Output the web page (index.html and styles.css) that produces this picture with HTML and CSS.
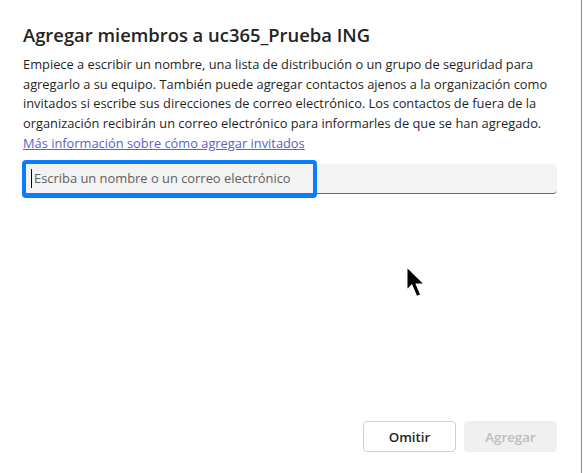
FILE: index.html
```html
<!DOCTYPE html>
<html lang="es">
<head>
<meta charset="utf-8">
<title>Agregar miembros</title>
<link rel="stylesheet" href="styles.css">
</head>
<body>
<div class="dialog">
  <h1 class="title">Agregar miembros a uc365_Prueba ING</h1>
  <p class="desc">Empiece a escribir un nombre, una lista de distribución o un grupo de seguridad para<br>agregarlo a su equipo. También puede agregar contactos ajenos a la organización como<br>invitados si escribe sus direcciones de correo electrónico. Los contactos de fuera de la<br>organización recibirán un correo electrónico para informarles de que se han agregado.<br><a class="link" href="#">Más información sobre cómo agregar invitados</a></p>
  <div class="field">
    <div class="input"><span class="caret"></span><span class="placeholder">Escriba un nombre o un correo electrónico</span></div>
    <div class="focus-ring"></div>
  </div>
  <div class="spacer"></div>
  <div class="actions">
    <button class="btn btn-secondary">Omitir</button>
    <button class="btn btn-disabled">Agregar</button>
  </div>
  <svg class="pointer" width="17" height="29" viewBox="0 0 17 29"><path d="M0.5 0.5 L0.5 20.5 L5 16 L10 27.8 L13 26.6 L8.3 15.6 L15.8 15.6 Z" fill="#000"/></svg>
</div>
</body>
</html>
```
FILE: styles.css
```css
html, body {
  margin: 0;
  padding: 0;
  background: #ffffff;
}
body {
  font-family: "Open Sans", "Noto Sans", sans-serif;
  color: #242424;
}
.dialog {
  position: relative;
  box-sizing: border-box;
  width: 582px;
  height: 473px;
  border-right: 1px solid #8a8a8a;
  padding: 21px 24px 21px 23px;
  display: flex;
  flex-direction: column;
}
.title {
  margin: 0;
  font-size: 18.4px;
  font-weight: 600;
  line-height: 28px;
  color: #242424;
  white-space: nowrap;
}
.desc {
  margin: 6px 0 0 0;
  font-size: 12.85px;
  line-height: 19.7px;
  color: #1f1f1f;
  white-space: nowrap;
}
.link {
  color: #5b5fc7;
  text-decoration: underline;
}
.field {
  position: relative;
  margin-top: 10px;
}
.input {
  box-sizing: border-box;
  height: 30px;
  background: #f3f3f3;
  border-radius: 4px;
  border-bottom: 1.5px solid #5b5fc7;
  display: flex;
  align-items: center;
  padding-left: 8px;
}
.caret {
  width: 1px;
  height: 19px;
  background: #000;
  margin-right: 2px;
}
.placeholder {
  font-size: 12.9px;
  color: #616161;
  white-space: nowrap;
}
.focus-ring {
  position: absolute;
  left: -1px;
  top: -4px;
  width: 295px;
  height: 38px;
  box-sizing: border-box;
  border: 4px solid #0a7cff;
  border-radius: 4px;
}
.spacer {
  flex: 1;
}
.actions {
  display: flex;
  justify-content: flex-end;
  gap: 8px;
}
.btn {
  box-sizing: border-box;
  width: 93px;
  height: 31px;
  border-radius: 4px;
  font-family: "Open Sans", "Noto Sans", sans-serif;
  font-size: 13.3px;
  font-weight: 600;
}
.btn-secondary {
  background: #ffffff;
  border: 1px solid #d1d1d1;
  color: #242424;
}
.btn-disabled {
  background: #f0f0f0;
  border: 1px solid #f0f0f0;
  color: #bdbdbd;
}
.pointer {
  position: absolute;
  left: 407px;
  top: 268px;
}
```
